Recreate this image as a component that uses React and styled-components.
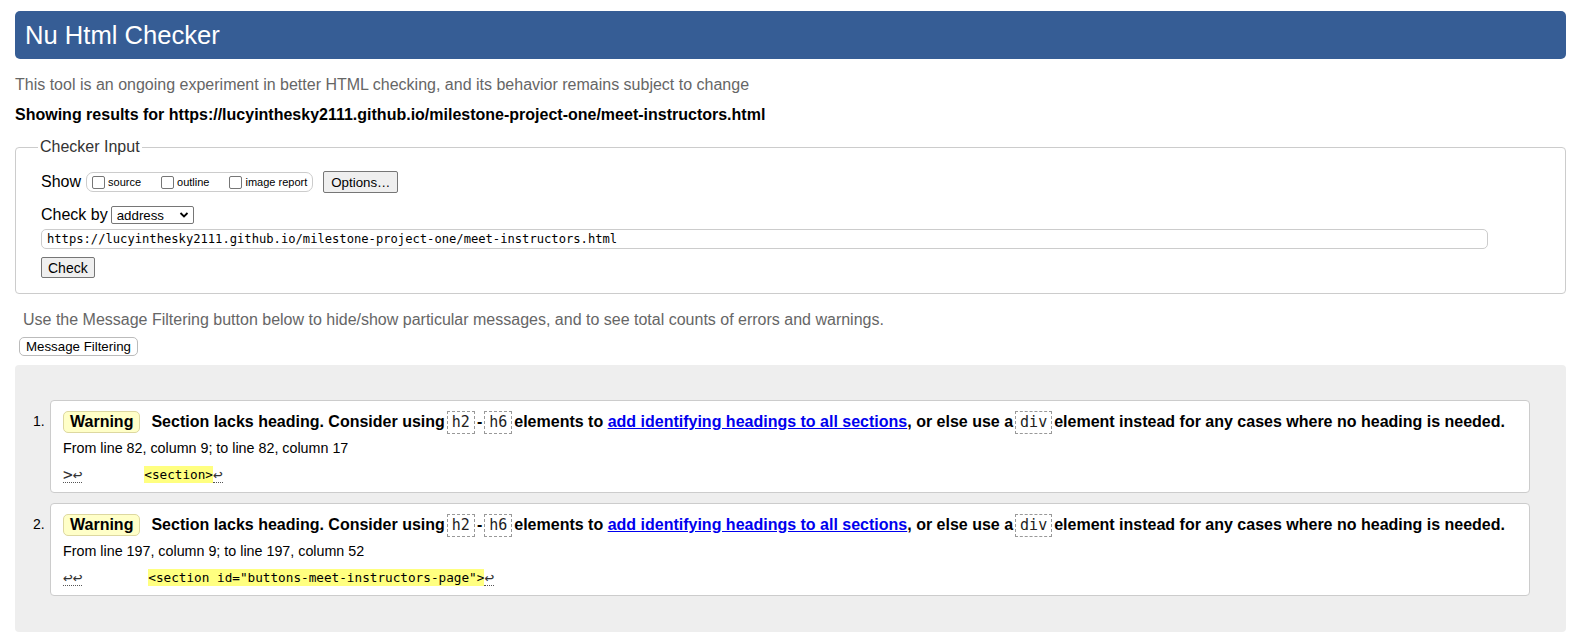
import React from 'react';
import styled, { createGlobalStyle } from 'styled-components';

const Global = createGlobalStyle`
  html, body {
    margin: 0;
    padding: 0;
    background: #fff;
  }
  body {
    font-family: "Liberation Sans", Arial, sans-serif;
    color: #000;
  }
`;

const Page = styled.div`
  padding: 11px 16px 12px 15px;
`;

const Title = styled.h1`
  margin: 0;
  height: 48px;
  box-sizing: border-box;
  padding: 0 10px;
  display: flex;
  align-items: center;
  background: #365d95;
  color: #fff;
  font-weight: normal;
  font-size: 25.6px;
  border-radius: 5px;
`;

const Intro = styled.p`
  margin: 17px 0 0;
  font-size: 16px;
  line-height: 18px;
  color: #666;
`;

const Results = styled.p`
  margin: 12px 0 0;
  font-size: 16px;
  font-weight: bold;
  line-height: 18px;
`;

const Fieldset = styled.fieldset`
  margin: 14px 0 0;
  padding: 15px 25px 15px;
  border: 1px solid #ccc;
  border-radius: 4px;
  min-width: 0;
`;

const Legend = styled.legend`
  padding: 0 2px;
  margin-left: -3px;
  font-size: 16px;
  color: #333;
`;

const Row = styled.div`
  display: flex;
  align-items: center;
  margin-top: ${(p) => p.$top || 0}px;
  font-size: 16px;
`;

const Label = styled.span`
  font-size: 16px;
  margin-right: ${(p) => p.$mr || 0}px;
`;

const CheckGroup = styled.div`
  display: flex;
  align-items: center;
  height: 20px;
  box-sizing: border-box;
  padding: 0 5px 0 5px;
  border: 1px solid #ccc;
  border-radius: 7px;
  margin-right: 10px;
`;

const CheckLabel = styled.label`
  display: flex;
  align-items: center;
  font-size: 11px;
  margin-right: ${(p) => p.$mr || 0}px;
`;

const Box = styled.span`
  display: inline-block;
  width: 11px;
  height: 11px;
  border: 1px solid #767676;
  border-radius: 2px;
  background: #fff;
  margin-right: 3px;
`;

const Button = styled.span`
  display: inline-flex;
  align-items: center;
  justify-content: center;
  box-sizing: border-box;
  height: ${(p) => p.$h || 21}px;
  padding: 0 ${(p) => p.$px || 6}px;
  font-size: ${(p) => p.$fs || 13.3}px;
  background: ${(p) => (p.$round ? '#fff' : '#efefef')};
  border: 1px solid ${(p) => (p.$round ? '#bbb' : '#767676')};
  border-radius: ${(p) => (p.$round ? 5 : 2)}px;
  color: #000;
`;

const Select = styled.span`
  display: inline-flex;
  align-items: center;
  justify-content: space-between;
  box-sizing: border-box;
  width: 83px;
  height: 18px;
  margin-left: 3px;
  padding: 0 4px 0 5px;
  border: 1px solid #767676;
  border-radius: 2px;
  font-size: 13.3px;
`;

const UrlInput = styled.div`
  margin-top: 5px;
  width: 1447px;
  height: 20px;
  box-sizing: border-box;
  padding: 0 5px;
  display: flex;
  align-items: center;
  border: 1px solid #ccc;
  border-radius: 5px;
  font-family: "DejaVu Sans Mono", "Liberation Mono", monospace;
  font-size: 12.15px;
  color: #000;
`;

const Hint = styled.p`
  margin: 17px 0 0 8px;
  font-size: 16px;
  line-height: 18px;
  color: #666;
`;

const FilterRow = styled.div`
  margin: 8px 0 0 4px;
  display: flex;
`;

const Results2 = styled.div`
  margin-top: 9px;
  background: #eee;
  border-radius: 4px;
  padding: 35px 36px 36px 18px;
`;

const List = styled.ol`
  margin: 0;
  padding: 0;
  list-style: none;
  display: flex;
  flex-direction: column;
  gap: 10px;
`;

const Item = styled.li`
  display: flex;
  align-items: flex-start;
`;

const Num = styled.span`
  width: 17px;
  padding-top: 13px;
  font-size: 14px;
  line-height: 16px;
`;

const Card = styled.div`
  flex: 1;
  background: #fff;
  border: 1px solid #ccc;
  border-radius: 4px;
  padding: 9px 12px 11px 12px;
  height: 93px;
  box-sizing: border-box;
`;

const Message = styled.div`
  display: flex;
  align-items: center;
  font-size: 16px;
  font-weight: bold;
  white-space: pre;
  height: 24px;
`;

const Badge = styled.span`
  display: inline-flex;
  align-items: center;
  height: 22px;
  box-sizing: border-box;
  padding: 0 6px;
  margin-right: 11px;
  background: #ffffc8;
  border: 1px solid #ddd8a0;
  border-radius: 5px;
`;

const Code = styled.code`
  display: inline-flex;
  align-items: center;
  height: 23px;
  box-sizing: border-box;
  padding: 0 4px;
  border: 1px dashed #999;
  font-family: "DejaVu Sans Mono", "Liberation Mono", monospace;
  font-weight: normal;
  font-size: 15px;
  color: #222;
  margin: 0 2px;
`;

const Link = styled.a`
  color: #0000ee;
  text-decoration: underline;
`;

const Location = styled.div`
  margin-top: 6px;
  font-size: 14.3px;
  line-height: 16px;
`;

const Extract = styled.div`
  margin-top: 10px;
  display: flex;
  align-items: center;
  font-family: "DejaVu Sans Mono", "Liberation Mono", monospace;
  font-size: 12.7px;
  white-space: pre;
  height: 17px;
`;

const Ctx = styled.span`
  border-bottom: 1px dotted #555;
  font-size: 16px;
  line-height: 15px;
  color: #333;
`;

const Mark = styled.b`
  font-weight: normal;
  background: #ffff80;
  line-height: 17px;
`;

const Gap = styled.span`
  display: inline-block;
  width: ${(p) => p.$w}px;
`;

const messages = [
  {
    loc: 'From line 82, column 9; to line 82, column 17',
    before: '>\u21A9',
    gap: 62,
    src: '<section>',
  },
  {
    loc: 'From line 197, column 9; to line 197, column 52',
    before: '\u21A9\u21A9',
    gap: 66,
    src: '<section id="buttons-meet-instructors-page">',
  },
];

const App = () => {
  return (
    <>
      <Global />
      <Page>
        <Title>Nu Html Checker</Title>
        <Intro>
          This tool is an ongoing experiment in better HTML checking, and its behavior remains subject to change
        </Intro>
        <Results>
          Showing results for https://lucyinthesky2111.github.io/milestone-project-one/meet-instructors.html
        </Results>

        <Fieldset>
          <Legend>Checker Input</Legend>
          <Row>
            <Label $mr={5}>Show</Label>
            <CheckGroup>
              <CheckLabel $mr={20}><Box />source</CheckLabel>
              <CheckLabel $mr={20}><Box />outline</CheckLabel>
              <CheckLabel><Box />image report</CheckLabel>
            </CheckGroup>
            <Button $h={22} $px={7}>Options…</Button>
          </Row>
          <Row $top={13}>
            <Label>Check by</Label>
            <Select>
              address
              <svg width="10" height="8" viewBox="0 0 10 8">
                <path d="M1.5 2 L5 5.5 L8.5 2" fill="none" stroke="#000" strokeWidth="1.8" />
              </svg>
            </Select>
          </Row>
          <UrlInput>https://lucyinthesky2111.github.io/milestone-project-one/meet-instructors.html</UrlInput>
          <Row $top={8}>
            <Button $h={21} $px={6} $fs={14}>Check</Button>
          </Row>
        </Fieldset>

        <Hint>
          Use the Message Filtering button below to hide/show particular messages, and to see total counts of errors and warnings.
        </Hint>
        <FilterRow>
          <Button $round $h={19} $px={6} $fs={13.3}>Message Filtering</Button>
        </FilterRow>

        <Results2>
          <List>
            {messages.map((m, i) => (
              <Item key={i}>
                <Num>{i + 1}.</Num>
                <Card>
                  <Message>
                    <Badge>Warning</Badge>
                    Section lacks heading. Consider using<Code>h2</Code>-<Code>h6</Code>elements to{' '}
                    <Link href="#">add identifying headings to all sections</Link>, or else use a
                    <Code>div</Code>element instead for any cases where no heading is needed.
                  </Message>
                  <Location>{m.loc}</Location>
                  <Extract>
                    <Ctx>{m.before}</Ctx>
                    <Gap $w={m.gap} />
                    <Mark>{m.src}</Mark>
                    <Ctx>{'\u21A9'}</Ctx>
                  </Extract>
                </Card>
              </Item>
            ))}
          </List>
        </Results2>
      </Page>
    </>
  );
};

export default App;
